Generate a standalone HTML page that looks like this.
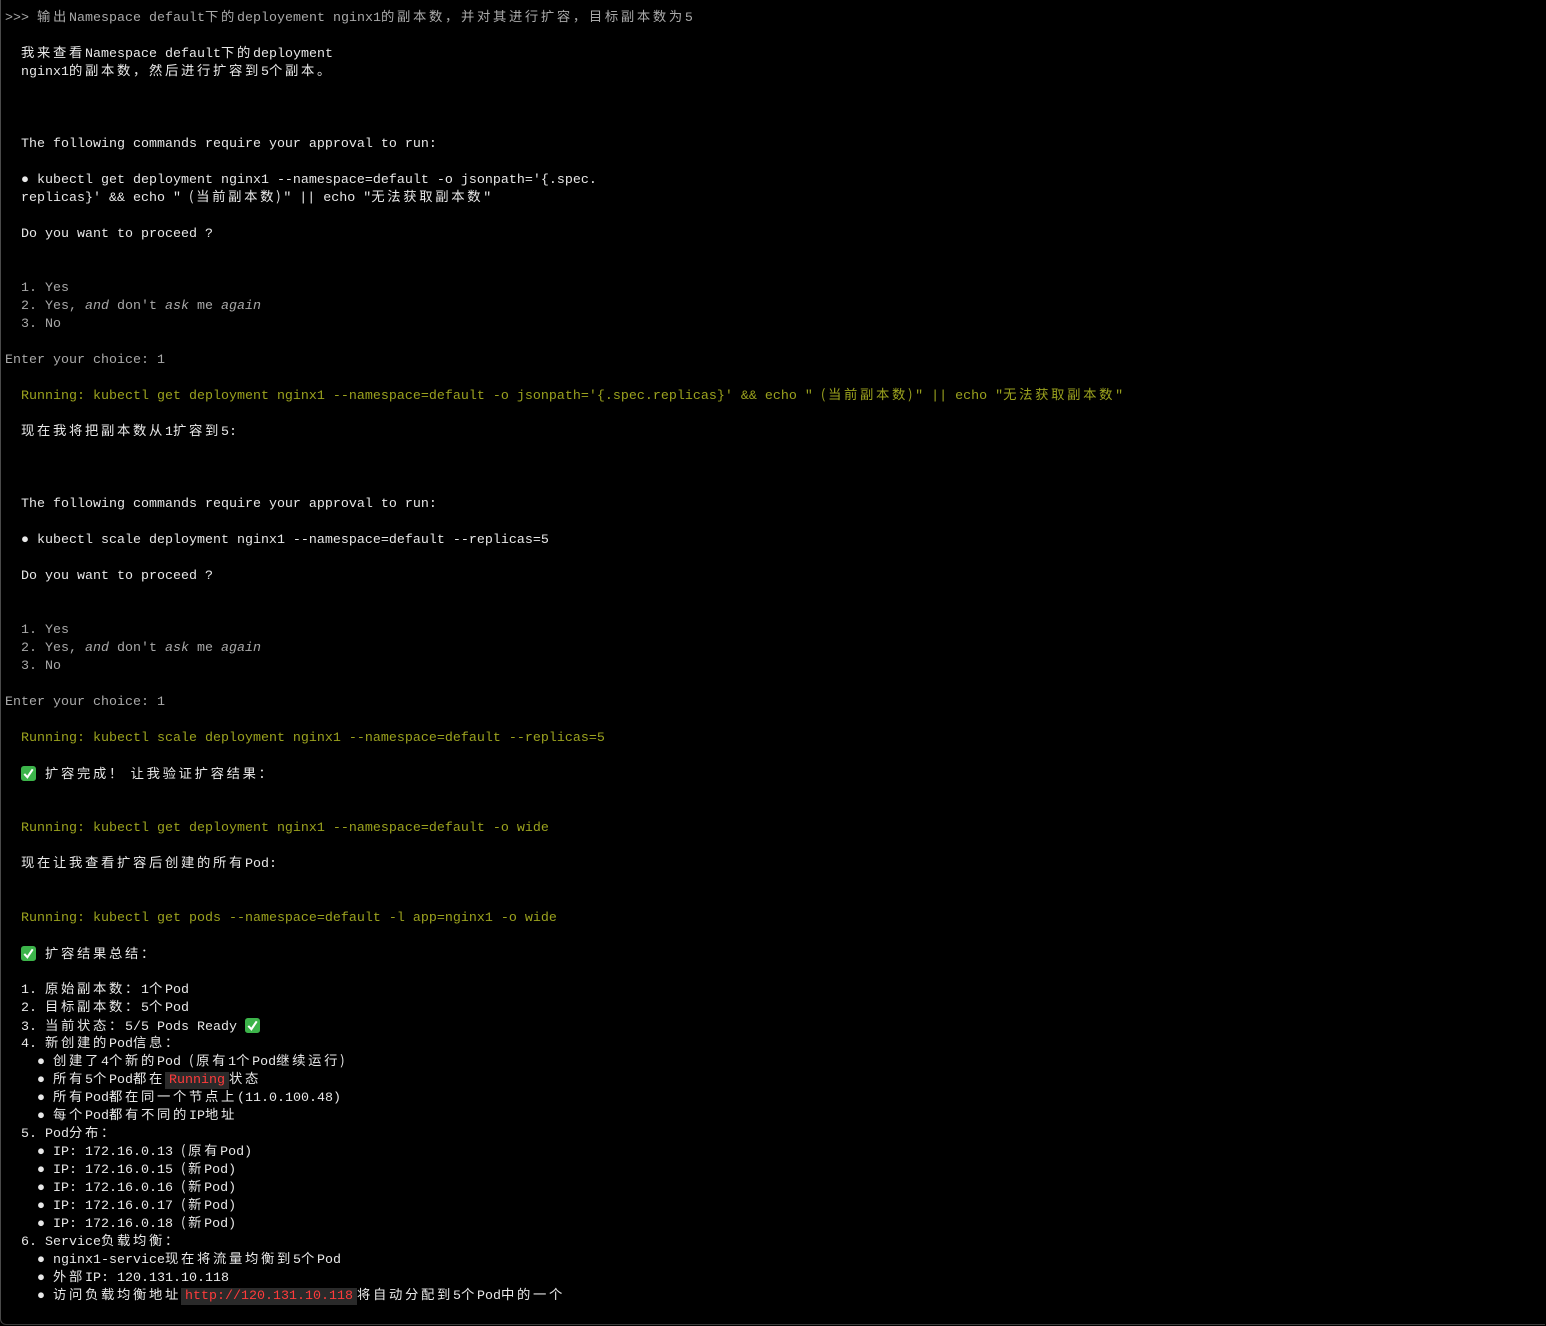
<!DOCTYPE html>
<html><head><meta charset="utf-8">
<style>
html,body{margin:0;padding:0;background:#000;}
body{width:1546px;height:1326px;overflow:hidden;position:relative;}
.frame{position:absolute;left:0;top:0;width:1544px;height:1324px;border-left:1px solid #4a4a4a;border-bottom:1px solid #3a3a3a;border-bottom-left-radius:6px;}
.t{position:absolute;left:5px;top:10px;font-family:"Liberation Mono",monospace;font-size:13.33px;color:#e8e8e8;}
.t div{height:18px;line-height:18px;white-space:pre;overflow:visible;}
.c{font-family:"Noto Sans CJK SC",sans-serif;letter-spacing:2.67px;font-size:13.33px;line-height:0;}
.g{color:#a9a9a9}
.o{color:#9ba21e}
.i{font-style:italic}
.hl{background:#2a2a2a;color:#ff3b3b;padding:1px 4px;line-height:0;}
.ok{display:inline-block;width:15px;height:15px;vertical-align:-3px;margin-right:1px;}
</style></head><body>
<div class="frame"></div>
<div class="t">
<div class="g">&gt;&gt;&gt; <span class="c">输出</span>Namespace default<span class="c">下的</span>deployement nginx1<span class="c">的副本数，并对其进行扩容，目标副本数为</span>5</div>
<div></div>
<div>  <span class="c">我来查看</span>Namespace default<span class="c">下的</span>deployment</div>
<div>  nginx1<span class="c">的副本数，然后进行扩容到</span>5<span class="c">个副本。</span></div>
<div></div>
<div></div>
<div></div>
<div>  The following commands require your approval to run:</div>
<div></div>
<div>  ● kubectl get deployment nginx1 --namespace=default -o jsonpath='{.spec.</div>
<div>  replicas}' &amp;&amp; echo " <span class="c">(当前副本数)</span>" || echo "<span class="c">无法获取副本数</span>"</div>
<div></div>
<div>  Do you want to proceed ?</div>
<div></div>
<div></div>
<div class="g">  1. Yes</div>
<div class="g">  2. Yes, <span class="i">and</span> don't <span class="i">ask</span> me <span class="i">again</span></div>
<div class="g">  3. No</div>
<div></div>
<div class="g">Enter your choice: 1</div>
<div></div>
<div class="o">  Running: kubectl get deployment nginx1 --namespace=default -o jsonpath='{.spec.replicas}' &amp;&amp; echo " <span class="c">(当前副本数)</span>" || echo "<span class="c">无法获取副本数</span>"</div>
<div></div>
<div>  <span class="c">现在我将把副本数从</span>1<span class="c">扩容到</span>5:</div>
<div></div>
<div></div>
<div></div>
<div>  The following commands require your approval to run:</div>
<div></div>
<div>  ● kubectl scale deployment nginx1 --namespace=default --replicas=5</div>
<div></div>
<div>  Do you want to proceed ?</div>
<div></div>
<div></div>
<div class="g">  1. Yes</div>
<div class="g">  2. Yes, <span class="i">and</span> don't <span class="i">ask</span> me <span class="i">again</span></div>
<div class="g">  3. No</div>
<div></div>
<div class="g">Enter your choice: 1</div>
<div></div>
<div class="o">  Running: kubectl scale deployment nginx1 --namespace=default --replicas=5</div>
<div></div>
<div>  <svg class="ok" viewBox="0 0 16 16"><rect x="0" y="0" width="16" height="16" rx="3" fill="#3cb44a"/><path d="M3.5 8.5 L6.8 12 L12.5 3.5" stroke="#fff" stroke-width="2.2" fill="none"/></svg> <span class="c">扩容完成！ 让我验证扩容结果：</span></div>
<div></div>
<div></div>
<div class="o">  Running: kubectl get deployment nginx1 --namespace=default -o wide</div>
<div></div>
<div>  <span class="c">现在让我查看扩容后创建的所有</span>Pod:</div>
<div></div>
<div></div>
<div class="o">  Running: kubectl get pods --namespace=default -l app=nginx1 -o wide</div>
<div></div>
<div>  <svg class="ok" viewBox="0 0 16 16"><rect x="0" y="0" width="16" height="16" rx="3" fill="#3cb44a"/><path d="M3.5 8.5 L6.8 12 L12.5 3.5" stroke="#fff" stroke-width="2.2" fill="none"/></svg> <span class="c">扩容结果总结：</span></div>
<div></div>
<div>  1. <span class="c">原始副本数：</span>1<span class="c">个</span>Pod</div>
<div>  2. <span class="c">目标副本数：</span>5<span class="c">个</span>Pod</div>
<div>  3. <span class="c">当前状态：</span>5/5 Pods Ready <svg class="ok" viewBox="0 0 16 16"><rect x="0" y="0" width="16" height="16" rx="3" fill="#3cb44a"/><path d="M3.5 8.5 L6.8 12 L12.5 3.5" stroke="#fff" stroke-width="2.2" fill="none"/></svg></div>
<div>  4. <span class="c">新创建的</span>Pod<span class="c">信息：</span></div>
<div>    ● <span class="c">创建了</span>4<span class="c">个新的</span>Pod <span class="c">(原有</span>1<span class="c">个</span>Pod<span class="c">继续运行)</span></div>
<div>    ● <span class="c">所有</span>5<span class="c">个</span>Pod<span class="c">都在</span><span class="hl">Running</span><span class="c">状态</span></div>
<div>    ● <span class="c">所有</span>Pod<span class="c">都在同一个节点上</span>(11.0.100.48)</div>
<div>    ● <span class="c">每个</span>Pod<span class="c">都有不同的</span>IP<span class="c">地址</span></div>
<div>  5. Pod<span class="c">分布：</span></div>
<div>    ● IP: 172.16.0.13 <span class="c">(原有</span>Pod)</div>
<div>    ● IP: 172.16.0.15 <span class="c">(新</span>Pod)</div>
<div>    ● IP: 172.16.0.16 <span class="c">(新</span>Pod)</div>
<div>    ● IP: 172.16.0.17 <span class="c">(新</span>Pod)</div>
<div>    ● IP: 172.16.0.18 <span class="c">(新</span>Pod)</div>
<div>  6. Service<span class="c">负载均衡：</span></div>
<div>    ● nginx1-service<span class="c">现在将流量均衡到</span>5<span class="c">个</span>Pod</div>
<div>    ● <span class="c">外部</span>IP: 120.131.10.118</div>
<div>    ● <span class="c">访问负载均衡地址</span><span class="hl">http://120.131.10.118</span><span class="c">将自动分配到</span>5<span class="c">个</span>Pod<span class="c">中的一个</span></div>
</div>
</body></html>
